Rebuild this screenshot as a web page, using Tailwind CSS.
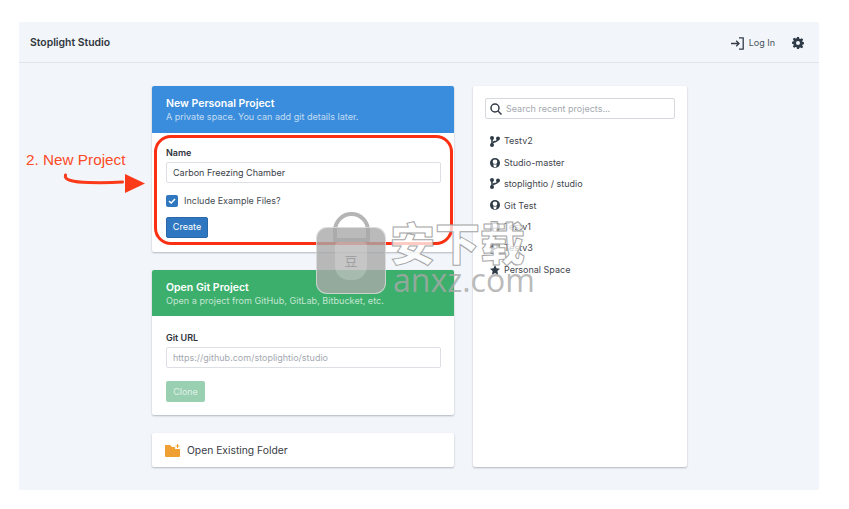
<!DOCTYPE html><html lang="en">
  <head>
    <meta charset="UTF-8" />
    <title>Stoplight Studio</title>
    <script src="https://cdn.jsdelivr.net/npm/@tailwindcss/browser@4"></script>
  </head>
  <body class="bg-white h-[509px] overflow-hidden font-['Inter',sans-serif] text-[#333b45]">
    <div class="relative h-[509px] pt-[22px] pl-[19px]">
      <div class="w-[800px] h-[468px] bg-[#f2f6fa] flex flex-col">
        <!-- top bar -->
        <div class="h-[41px] shrink-0 border-b border-[#dfe4ec] flex items-center pt-[2px] pl-[11px] pr-[15px]">
          <span class="text-[10.4px] font-semibold text-[#30363d]">Stoplight Studio</span>
          <div class="ml-auto flex items-center">
            <svg class="w-[13px] h-[13px] text-[#333c47]" viewBox="0 0 13 13" fill="none" stroke="currentColor" stroke-width="1.3"><path d="M0 6.500h7.500M5.200 3.800 8 6.500 5.200 9.200" /><path d="M8 .8h4.200v11.400H8" /></svg>
            <span class="ml-[5px] text-[9px] text-[#4a525c]">Log In</span>
            <svg class="ml-[17px] w-[12px] h-[12px] text-[#2f3b47]" viewBox="0 0 24 24" fill="currentColor"><path fill-rule="evenodd" d="M10 0h4l.7 3.400 2 .8L19.600 2.300 22.400 5.100 20.500 8l.8 2 2.700.6v3.800l-2.700.6-.8 2 1.900 2.900-2.800 2.800-2.900-1.900-2 .8L14 24h-4l-.7-3.400-2-.8-2.900 1.900-2.800-2.800L3.500 16l-.8-2L0 13.400V9.600L2.700 9l.8-2-1.900-2.900 2.800-2.800 2.900 1.900 2-.8zM12 8a4 4 0 1 0 0 8 4 4 0 0 0 0-8z"/></svg>
          </div>
        </div>

        <div class="flex pl-[133px] pt-[23px] gap-[19px]">
          <!-- left column -->
          <div class="w-[302px] flex flex-col gap-[18px]">
            <div class="h-[166px] bg-white rounded-[2px] shadow-[0_1px_2px_rgba(60,70,90,0.35)] overflow-hidden">
              <div class="h-[47px] bg-[#3a8ddc] px-[14px] pt-[11px] text-white">
                <div class="text-[10.5px] leading-[13px] font-semibold">New Personal Project</div>
                <div class="text-[9.05px] leading-[13px] text-white/70">A private space. You can add git details later.</div>
              </div>
              <div class="pl-[14px] pr-[13px] pt-[14px]">
                <div class="text-[9px] leading-[11px] font-semibold text-[#2f353c]">Name</div>
                <div class="mt-[4px] h-[21px] border border-[#dcdfe3] rounded-[2px] flex items-center px-[6px] text-[9px] text-[#3a4047]">Carbon Freezing Chamber</div>
                <div class="mt-[11px] flex items-center">
                  <span class="w-[12px] h-[12px] rounded-[2px] bg-[#2f77bf] flex items-center justify-center">
                    <svg class="w-[8px] h-[8px]" viewBox="0 0 8 8" fill="none" stroke="white" stroke-width="1.500"><path d="M1 4.200 3.200 6 7 2" /></svg>
                  </span>
                  <span class="ml-[6px] text-[9px] text-[#444b53]">Include Example Files?</span>
                </div>
                <button class="mt-[9px] h-[21px] w-[42px] bg-[#2f77c0] border border-[#2a68a8] rounded-[2px] text-white text-[9px]">Create</button>
              </div>
            </div>

            <div class="h-[145px] bg-white rounded-[2px] shadow-[0_1px_2px_rgba(60,70,90,0.35)] overflow-hidden">
              <div class="h-[46px] bg-[#3caf6c] px-[14px] pt-[11px] text-white">
                <div class="text-[10.5px] leading-[13px] font-semibold">Open Git Project</div>
                <div class="text-[9.1px] leading-[13px] text-white/70">Open a project from GitHub, GitLab, Bitbucket, etc.</div>
              </div>
              <div class="pl-[14px] pr-[13px] pt-[16px]">
                <div class="text-[9px] leading-[11px] font-semibold text-[#2f353c]">Git URL</div>
                <div class="mt-[4px] h-[21px] border border-[#dcdfe3] rounded-[2px] flex items-center px-[6px] text-[9px] text-[#a4a9af]">https://github.com/stoplightio/studio</div>
                <button class="mt-[13px] h-[21px] w-[39px] bg-[#9ad0b2] rounded-[2px] text-white/70 text-[9px]">Clone</button>
              </div>
            </div>

            <div class="h-[34px] bg-white rounded-[2px] shadow-[0_1px_2px_rgba(60,70,90,0.35)] flex items-center pl-[13px] pt-[1px]">
              <svg class="w-[15px] h-[13px]" viewBox="0 0 15 13" fill="#f0a033"><path d="M0 1h5l2 2h3v2h5v7a1 1 0 0 1-1 1H1a1 1 0 0 1-1-1z"/><path d="M12 0h1v1.500h1.500v1H13V4h-1V2.500h-1.500v-1H12z"/></svg>
              <span class="ml-[7px] text-[10.3px] text-[#3a4047]">Open Existing Folder</span>
            </div>
          </div>

          <!-- recent projects -->
          <div class="w-[214px] h-[381px] bg-white rounded-[2px] shadow-[0_1px_2px_rgba(60,70,90,0.35)] px-[12px] pt-[12px]">
            <div class="h-[21px] border border-[#d5d9de] rounded-[2px] flex items-center px-[4px]">
              <svg class="w-[12px] h-[12px] text-[#333c47]" viewBox="0 0 12 12" fill="none" stroke="currentColor" stroke-width="1.500"><circle cx="5" cy="5" r="4"/><path d="m8 8 3.500 3.500"/></svg>
              <span class="ml-[4px] text-[9px] text-[#a4a9af]">Search recent projects...</span>
            </div>
            <ul class="mt-[11.500px] pl-[5px] text-[9px] text-[#3f464e]">
              <li class="h-[21.400px] flex items-center">
                <svg class="w-[10px] h-[11px] text-[#2f3b47]" viewBox="0 0 10 11" fill="currentColor"><circle cx="2" cy="2" r="2"/><circle cx="2" cy="9" r="2"/><circle cx="8" cy="2.500" r="2"/><path d="M1.200 2h1.600v7H1.200z"/><path d="M7.200 3h1.600c0 3.400-4.600 3-6 4.800V5.600c1.400-1 4.400-.6 4.400-2.600z"/></svg>
                <span class="ml-[4px]">Testv2</span>
              </li>
              <li class="h-[21.400px] flex items-center">
                <svg class="w-[10px] h-[10px] text-[#2f3b47]" viewBox="0 0 10 10"><circle cx="5" cy="5" r="5" fill="currentColor"/><circle cx="5" cy="3.800" r="2.300" fill="white"/><path d="M3.200 6.500h3.600L6 9.200H4z" fill="white"/></svg>
                <span class="ml-[4px]">Studio-master</span>
              </li>
              <li class="h-[21.400px] flex items-center">
                <svg class="w-[10px] h-[11px] text-[#2f3b47]" viewBox="0 0 10 11" fill="currentColor"><circle cx="2" cy="2" r="2"/><circle cx="2" cy="9" r="2"/><circle cx="8" cy="2.500" r="2"/><path d="M1.200 2h1.600v7H1.200z"/><path d="M7.200 3h1.600c0 3.400-4.600 3-6 4.800V5.600c1.400-1 4.400-.6 4.400-2.600z"/></svg>
                <span class="ml-[4px]">stoplightio / studio</span>
              </li>
              <li class="h-[21.400px] flex items-center">
                <svg class="w-[10px] h-[10px] text-[#2f3b47]" viewBox="0 0 10 10"><circle cx="5" cy="5" r="5" fill="currentColor"/><circle cx="5" cy="3.800" r="2.300" fill="white"/><path d="M3.200 6.500h3.600L6 9.200H4z" fill="white"/></svg>
                <span class="ml-[4px]">Git Test</span>
              </li>
              <li class="h-[21.400px] flex items-center">
                <svg class="w-[10px] h-[10px] text-[#2f3b47]" viewBox="0 0 10 10"><circle cx="5" cy="5" r="5" fill="currentColor"/><circle cx="5" cy="3.800" r="2.300" fill="white"/><path d="M3.200 6.500h3.600L6 9.200H4z" fill="white"/></svg>
                <span class="ml-[4px]">Testv1</span>
              </li>
              <li class="h-[21.400px] flex items-center">
                <svg class="w-[10px] h-[11px] text-[#2f3b47]" viewBox="0 0 10 11" fill="currentColor"><circle cx="2" cy="2" r="2"/><circle cx="2" cy="9" r="2"/><circle cx="8" cy="2.500" r="2"/><path d="M1.200 2h1.600v7H1.200z"/><path d="M7.200 3h1.600c0 3.400-4.600 3-6 4.800V5.600c1.400-1 4.400-.6 4.400-2.600z"/></svg>
                <span class="ml-[4px]">Testv3</span>
              </li>
              <li class="h-[21.400px] flex items-center">
                <svg class="w-[10px] h-[10px] text-[#2f3b47]" viewBox="0 0 10 10" fill="currentColor"><path d="m5 0 1.500 3.300 3.500.4-2.600 2.400.7 3.600L5 8l-3.100 1.700.7-3.600L0 3.700l3.500-.4z"/></svg>
                <span class="ml-[4px]">Personal Space</span>
              </li>
            </ul>
          </div>
        </div>
      </div>

      <!-- annotation over the screenshot -->
      <div class="absolute left-[26px] top-[150px] text-[15.3px] leading-[20px] text-[#fb4a26] font-['Liberation_Sans',sans-serif]">2. New Project</div>
      <svg class="absolute left-[60px] top-[170px] w-[90px] h-[26px]" viewBox="0 0 90 26" fill="none">
        <path d="M5.500 5c-2 5 8 7 23 7.500 12 .3 26 0 34-.5" stroke="#fb3a1a" stroke-width="3" stroke-linecap="round"/>
        <path d="M65 4 85 13.500 65 23z" fill="#fb3a1a"/>
      </svg>
      <div class="absolute left-[154px] top-[135px] w-[299px] h-[110px] border-[3px] border-[#fb2f12] rounded-[17px]"></div>

      <!-- watermark -->
      <div class="absolute left-[316px] top-[212px] w-[70px] h-[82px]">
        <div class="absolute left-[17px] top-0 w-[37px] h-[30px] border-[4px] border-[#b5b5b5] rounded-t-[19px]"></div>
        <div class="absolute left-0 top-[15px] w-[70px] h-[67px] rounded-[11px] bg-[#a9a9a9]/80 border border-white/50 flex items-center justify-center">
          <div class="w-[32px] h-[38px] rounded-b-[14px] rounded-t-[4px] bg-white/20 flex items-center justify-center text-[13px] text-[#a0a0a0] font-['Noto_Sans_CJK_SC',sans-serif]">豆</div>
        </div>
      </div>
      <div class="absolute left-[390px] top-[216px] text-[45px] leading-[52px] font-black whitespace-nowrap text-white/75 [-webkit-text-stroke:1px_#a6a6a6] font-['Noto_Sans_CJK_SC',sans-serif]">安下载</div>
      <div class="absolute left-[393px] top-[262px] text-[32px] leading-[36px] whitespace-nowrap text-[#a8a8a8]/80 font-['Open_Sans',sans-serif]">anxz.com</div>
    </div>
  </body>
</html>
